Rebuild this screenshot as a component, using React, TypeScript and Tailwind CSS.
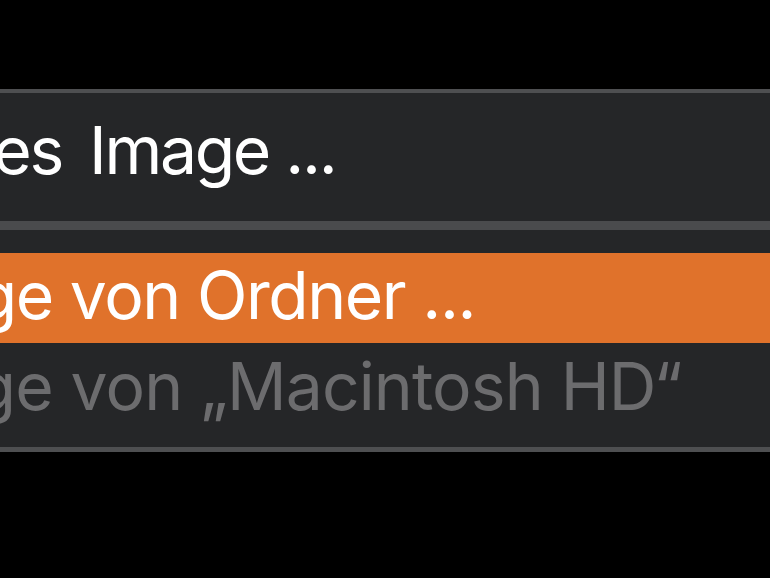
import React from "react";

const font = { fontFamily: "Inter, 'Noto Sans', sans-serif" };

function Row({
  prefix,
  rest,
  anchor,
  gap,
}: {
  prefix: string;
  rest: string;
  anchor: string;
  gap?: string;
}) {
  return (
    <div className="flex whitespace-nowrap">
      <span className={`flex shrink-0 justify-end ${anchor}`}>
        <span className={`whitespace-pre ${gap ?? ""}`}>{prefix}</span>
      </span>
      <span className="whitespace-pre">{rest}</span>
    </div>
  );
}

export default function App() {
  return (
    <div
      className="w-[770px] h-[578px] overflow-hidden bg-black pt-[89px] text-[66px] leading-none"
      style={font}
    >
      <div className="border-t-[4px] border-b-[5px] border-[#4e4f51] bg-[#252628]">
        <div className="flex h-[128px] items-center pb-[14px] text-white tracking-[-0.035em]">
          <Row prefix="Leeres" rest="Image ..." anchor="w-[89px]" gap="mr-[27px]" />
        </div>
        <div className="h-[9px] bg-[#4a4b4d]" />
        <div className="h-[23px]" />
        <div className="flex h-[90px] items-center pb-[6px] bg-[#e0722b] text-white tracking-[-0.022em]">
          <Row prefix="Image von " rest="Ordner ..." anchor="w-[197px]" />
        </div>
        <div className="flex h-[104px] items-center pb-[19px] text-[#6c6c6e] tracking-[-0.013em]">
          <Row prefix="Image von " rest="„Macintosh HD“" anchor="w-[200px]" />
        </div>
      </div>
    </div>
  );
}
